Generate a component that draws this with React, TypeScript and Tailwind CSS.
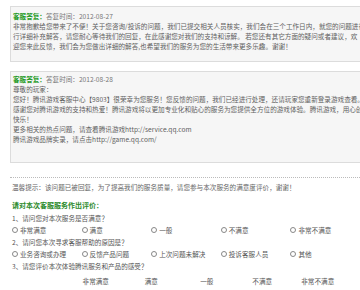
import React from "react";

const box1Lines = [
  "非常抱歉给您带来了不便！关于您咨询/投诉的问题，我们已提交相关人员核实，我们会在三个工作日内，就您的问题进行",
  "行详细补充解答，请您耐心等待我们的回复，在此感谢您对我们的支持和谅解。 若您还有其它方面的疑问或者建议，欢",
  "迎您来此反馈，我们会为您做出详细的解答,也希望我们的服务为您的生活带来更多乐趣。谢谢！",
];

const box2Lines = [
  "尊敬的玩家：",
  "您好！腾讯游戏客服中心【9803】很荣幸为您服务！您反馈的问题，我们已经进行处理，还请玩家您重新登录游戏查看。",
  "感谢您对腾讯游戏的支持和热爱！腾讯游戏将以更加专业化和贴心的服务为您提供全方位的游戏体验。腾讯游戏，用心创造",
  "快乐！",
  "更多相关的热点问题，请查看腾讯游戏http://service.qq.com",
  "腾讯游戏品牌实录，请点击http://game.qq.com/",
];

const q1 = ["非常满意", "满意", "一般", "不满意", "非常不满意"];
const q2 = ["业务咨询或办理", "反馈产品问题", "上次问题未解决", "投诉客服人员", "其他"];

function Reply({ date, lines, last }: { date: string; lines: string[]; last?: boolean }) {
  return (
    <div className={`w-[560px] ml-[10px] border border-[#dcdcdc] bg-[#f6f6f6] pl-[2px] ${last ? "pt-[2px] pb-[18px]" : "pt-[4px] pb-[10px]"}`}>
      <div className="whitespace-nowrap">
        <span className="font-bold text-[#1f9a1f]">客服答复：</span>
        <span className="text-[#777]">答复时间：{date}</span>
      </div>
      {lines.map((l) => (
        <div key={l} className="whitespace-nowrap text-[#5f5f5f]">
          {l}
        </div>
      ))}
    </div>
  );
}

function Radio({ label }: { label: string }) {
  return (
    <div className="w-[71px] flex items-center gap-[2px] whitespace-nowrap">
      <span className="w-[6px] h-[6px] rounded-full border border-[#888] bg-white" />
      <span>{label}</span>
    </div>
  );
}

export default function App() {
  return (
    <div
      className="w-[360px] h-[290px] overflow-hidden bg-white text-[6.6px] leading-[10px] text-[#555]"
      style={{ fontFamily: '"Noto Sans CJK SC", "Noto Sans", sans-serif' }}
    >
      <div className="pt-[6px]">
        <Reply date="2012-08-27" lines={box1Lines} />
        <div className="h-[9px]" />
        <Reply date="2012-08-28" lines={box2Lines} last />
      </div>

      <div className="ml-[10px] mt-[14px] w-[560px] border-t border-dotted border-[#bbb]" />
      <div className="ml-[12px] mt-[4px] whitespace-nowrap text-[#666]">
        温馨提示：该问题已被回复，为了提高我们的服务质量，请您参与本次服务的满意度评价，谢谢！
      </div>

      <div className="ml-[12px] mt-[8px] font-bold text-[7px] text-[#2a8a2a]">请对本次客服服务作出评价：</div>
      <div className="ml-[12px] mt-[2px] leading-[12px]">
        <div>1、请问您对本次服务是否满意？</div>
        <div className="flex">
          {q1.map((t) => (
            <Radio key={t} label={t} />
          ))}
        </div>
        <div>2、请问您本次寻求客服帮助的原因是？</div>
        <div className="flex">
          {q2.map((t) => (
            <Radio key={t} label={t} />
          ))}
        </div>
        <div>3、请您评价本次体验腾讯服务和产品的感受？</div>
        <div className="flex mt-[3px]">
          <div className="w-[56px]" />
          {q1.map((t) => (
            <div key={t} className="w-[55.5px] text-center whitespace-nowrap">
              {t}
            </div>
          ))}
        </div>
      </div>
    </div>
  );
}
